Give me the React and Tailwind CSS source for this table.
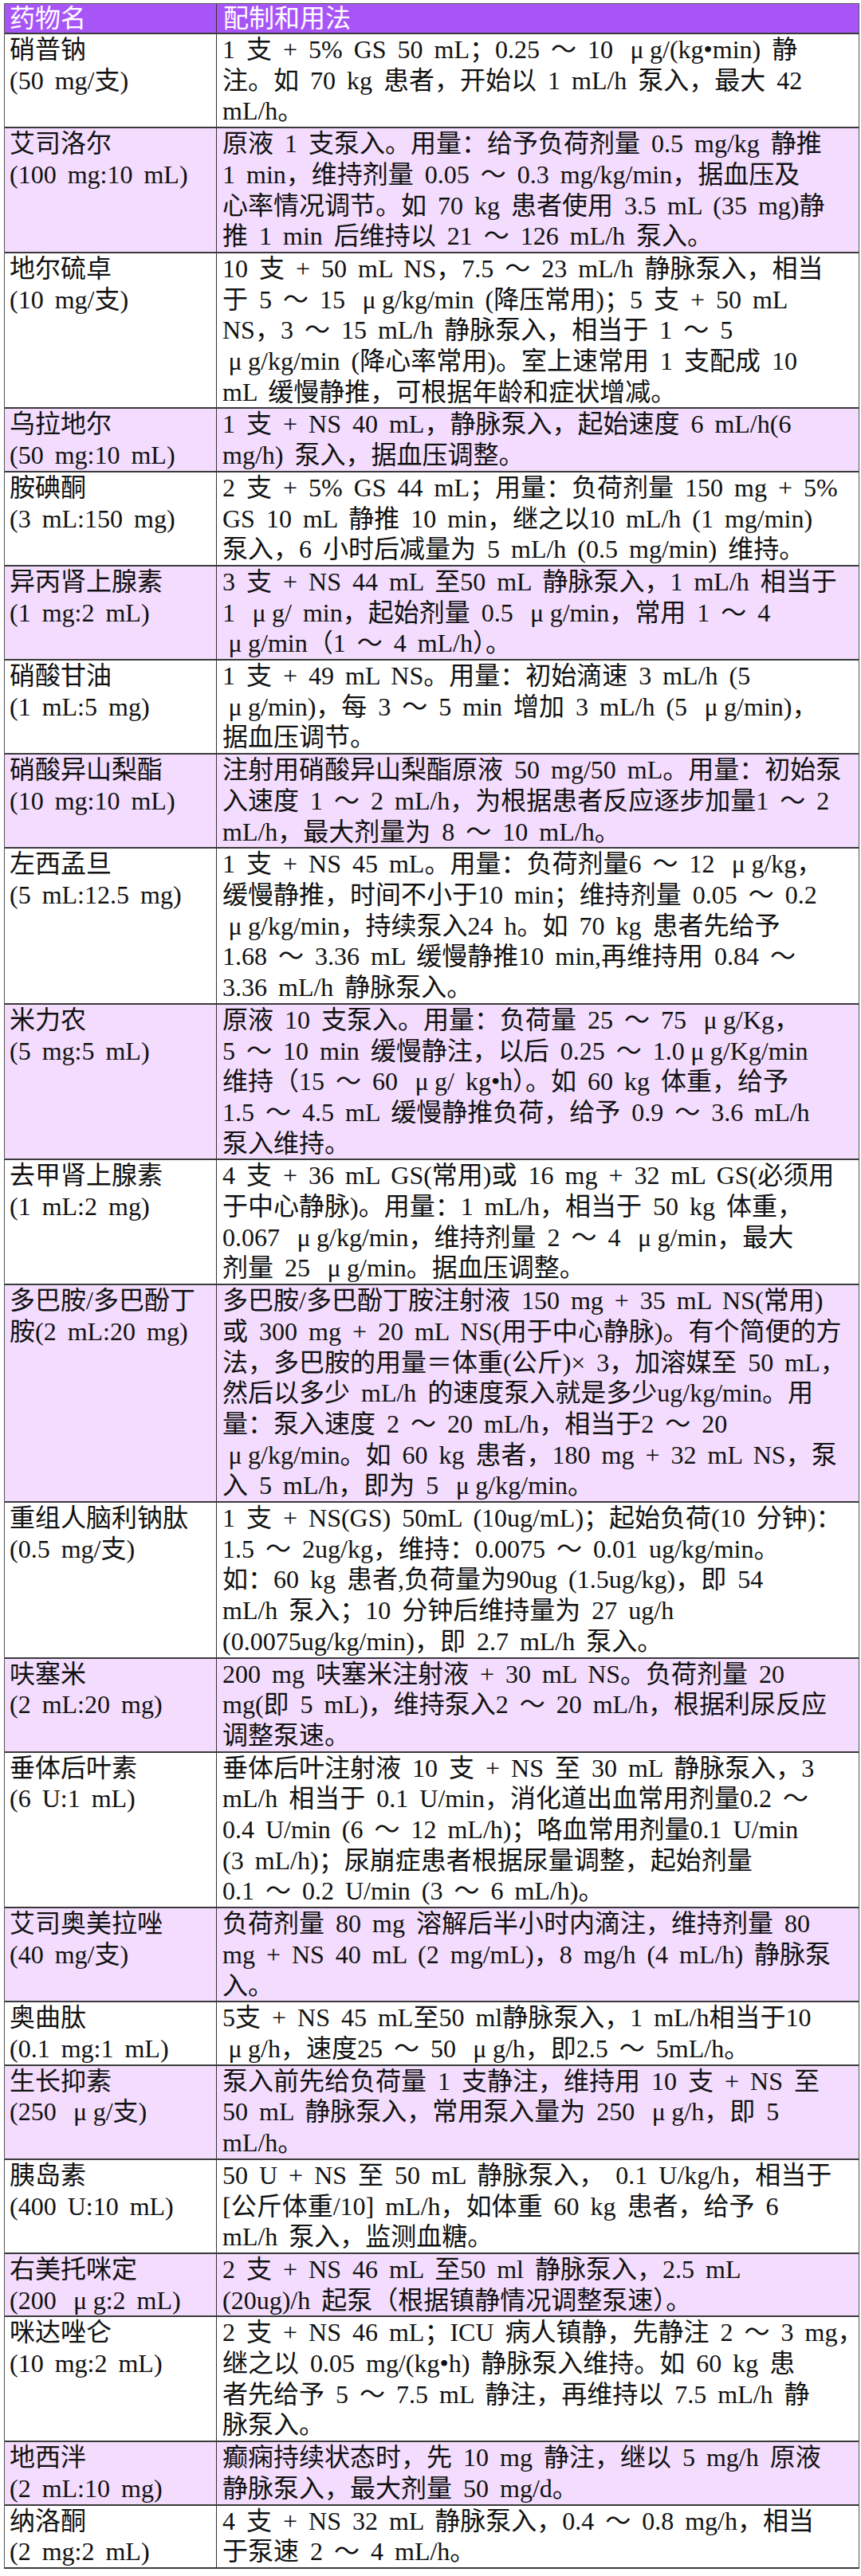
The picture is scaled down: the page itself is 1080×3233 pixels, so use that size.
const rows = [
  {
    name: ["硝普钠", "(50 mg/支)"],
    lines: [
      "1 支 + 5% GS 50 mL；0.25 ～ 10 μg/(kg•min) 静",
      "注。如 70 kg 患者，开始以 1 mL/h 泵入，最大 42",
      "mL/h。",
    ],
  },
  {
    name: ["艾司洛尔", "(100 mg:10 mL)"],
    lines: [
      "原液 1 支泵入。用量：给予负荷剂量 0.5 mg/kg 静推",
      "1 min，维持剂量 0.05 ～ 0.3 mg/kg/min，据血压及",
      "心率情况调节。如 70 kg 患者使用 3.5 mL (35 mg)静",
      "推 1 min 后维持以 21 ～ 126 mL/h 泵入。",
    ],
  },
  {
    name: ["地尔硫卓", "(10 mg/支)"],
    lines: [
      "10 支 + 50 mL NS，7.5 ～ 23 mL/h 静脉泵入，相当",
      "于 5 ～ 15 μg/kg/min (降压常用)；5 支 + 50 mL",
      "NS，3 ～ 15 mL/h 静脉泵入，相当于 1 ～ 5",
      "μg/kg/min (降心率常用)。室上速常用 1 支配成 10",
      "mL 缓慢静推，可根据年龄和症状增减。",
    ],
  },
  {
    name: ["乌拉地尔", "(50 mg:10 mL)"],
    lines: [
      "1 支 + NS 40 mL，静脉泵入，起始速度 6 mL/h(6",
      "mg/h) 泵入，据血压调整。",
    ],
  },
  {
    name: ["胺碘酮", "(3 mL:150 mg)"],
    lines: [
      "2 支 + 5% GS 44 mL；用量：负荷剂量 150 mg + 5%",
      "GS 10 mL 静推 10 min，继之以10 mL/h (1 mg/min)",
      "泵入，6 小时后减量为 5 mL/h (0.5 mg/min) 维持。",
    ],
  },
  {
    name: ["异丙肾上腺素", "(1 mg:2 mL)"],
    lines: [
      "3 支 + NS 44 mL 至50 mL 静脉泵入，1 mL/h 相当于",
      "1 μg/ min，起始剂量 0.5 μg/min，常用 1 ～ 4",
      "μg/min（1 ～ 4 mL/h）。",
    ],
  },
  {
    name: ["硝酸甘油", "(1 mL:5 mg)"],
    lines: [
      "1 支 + 49 mL NS。用量：初始滴速 3 mL/h (5",
      "μg/min)，每 3 ～ 5 min 增加 3 mL/h (5 μg/min)，",
      "据血压调节。",
    ],
  },
  {
    name: ["硝酸异山梨酯", "(10 mg:10 mL)"],
    lines: [
      "注射用硝酸异山梨酯原液 50 mg/50 mL。用量：初始泵",
      "入速度 1 ～ 2 mL/h，为根据患者反应逐步加量1 ～ 2",
      "mL/h，最大剂量为 8 ～ 10 mL/h。",
    ],
  },
  {
    name: ["左西孟旦", "(5 mL:12.5 mg)"],
    lines: [
      "1 支 + NS 45 mL。用量：负荷剂量6 ～ 12 μg/kg，",
      "缓慢静推，时间不小于10 min；维持剂量 0.05 ～ 0.2",
      "μg/kg/min，持续泵入24 h。如 70 kg 患者先给予",
      "1.68 ～ 3.36 mL 缓慢静推10 min,再维持用 0.84 ～",
      "3.36 mL/h 静脉泵入。",
    ],
  },
  {
    name: ["米力农", "(5 mg:5 mL)"],
    lines: [
      "原液 10 支泵入。用量：负荷量 25 ～ 75 μg/Kg，",
      "5 ～ 10 min 缓慢静注，以后 0.25 ～ 1.0μg/Kg/min",
      "维持（15 ～ 60 μg/ kg•h）。如 60 kg 体重，给予",
      "1.5 ～ 4.5 mL 缓慢静推负荷，给予 0.9 ～ 3.6 mL/h",
      "泵入维持。",
    ],
  },
  {
    name: ["去甲肾上腺素", "(1 mL:2 mg)"],
    lines: [
      "4 支 + 36 mL GS(常用)或 16 mg + 32 mL GS(必须用",
      "于中心静脉)。用量：1 mL/h，相当于 50 kg 体重，",
      "0.067 μg/kg/min，维持剂量 2 ～ 4 μg/min，最大",
      "剂量 25 μg/min。据血压调整。",
    ],
  },
  {
    name: ["多巴胺/多巴酚丁", "胺(2 mL:20 mg)"],
    lines: [
      "多巴胺/多巴酚丁胺注射液 150 mg + 35 mL NS(常用)",
      "或 300 mg + 20 mL NS(用于中心静脉)。有个简便的方",
      "法，多巴胺的用量＝体重(公斤)× 3，加溶媒至 50 mL，",
      "然后以多少 mL/h 的速度泵入就是多少ug/kg/min。用",
      "量：泵入速度 2 ～ 20 mL/h，相当于2 ～ 20",
      "μg/kg/min。如 60 kg 患者，180 mg + 32 mL NS，泵",
      "入 5 mL/h，即为 5 μg/kg/min。",
    ],
  },
  {
    name: ["重组人脑利钠肽", "(0.5 mg/支)"],
    lines: [
      "1 支 + NS(GS) 50mL (10ug/mL)；起始负荷(10 分钟)：",
      "1.5 ～ 2ug/kg，维持：0.0075 ～ 0.01 ug/kg/min。",
      "如：60 kg 患者,负荷量为90ug (1.5ug/kg)，即 54",
      "mL/h 泵入；10 分钟后维持量为 27 ug/h",
      "(0.0075ug/kg/min)，即 2.7 mL/h 泵入。",
    ],
  },
  {
    name: ["呋塞米", "(2 mL:20 mg)"],
    lines: [
      "200 mg 呋塞米注射液 + 30 mL NS。负荷剂量 20",
      "mg(即 5 mL)，维持泵入2 ～ 20 mL/h，根据利尿反应",
      "调整泵速。",
    ],
  },
  {
    name: ["垂体后叶素", "(6 U:1 mL)"],
    lines: [
      "垂体后叶注射液 10 支 + NS 至 30 mL 静脉泵入，3",
      "mL/h 相当于 0.1 U/min，消化道出血常用剂量0.2 ～",
      "0.4 U/min (6 ～ 12 mL/h)；咯血常用剂量0.1 U/min",
      "(3 mL/h)；尿崩症患者根据尿量调整，起始剂量",
      "0.1 ～ 0.2 U/min (3 ～ 6 mL/h)。",
    ],
  },
  {
    name: ["艾司奥美拉唑", "(40 mg/支)"],
    lines: [
      "负荷剂量 80 mg 溶解后半小时内滴注，维持剂量 80",
      "mg + NS 40 mL (2 mg/mL)，8 mg/h (4 mL/h) 静脉泵",
      "入。",
    ],
  },
  {
    name: ["奥曲肽", "(0.1 mg:1 mL)"],
    lines: [
      "5支 + NS 45 mL至50 ml静脉泵入，1 mL/h相当于10",
      "μg/h，速度25 ～ 50 μg/h，即2.5 ～ 5mL/h。",
    ],
  },
  {
    name: ["生长抑素", "(250 μg/支)"],
    lines: [
      "泵入前先给负荷量 1 支静注，维持用 10 支 + NS 至",
      "50 mL 静脉泵入，常用泵入量为 250 μg/h，即 5",
      "mL/h。",
    ],
  },
  {
    name: ["胰岛素", "(400 U:10 mL)"],
    lines: [
      "50 U + NS 至 50 mL 静脉泵入， 0.1 U/kg/h，相当于",
      "[公斤体重/10] mL/h，如体重 60 kg 患者，给予 6",
      "mL/h 泵入，监测血糖。",
    ],
  },
  {
    name: ["右美托咪定", "(200 μg:2 mL)"],
    lines: [
      "2 支 + NS 46 mL 至50 ml 静脉泵入，2.5 mL",
      "(20ug)/h 起泵（根据镇静情况调整泵速）。",
    ],
  },
  {
    name: ["咪达唑仑", "(10 mg:2 mL)"],
    lines: [
      "2 支 + NS 46 mL；ICU 病人镇静，先静注 2 ～ 3 mg，",
      "继之以 0.05 mg/(kg•h) 静脉泵入维持。如 60 kg 患",
      "者先给予 5 ～ 7.5 mL 静注，再维持以 7.5 mL/h 静",
      "脉泵入。",
    ],
  },
  {
    name: ["地西泮", "(2 mL:10 mg)"],
    lines: [
      "癫痫持续状态时，先 10 mg 静注，继以 5 mg/h 原液",
      "静脉泵入，最大剂量 50 mg/d。",
    ],
  },
  {
    name: ["纳洛酮", "(2 mg:2 mL)"],
    lines: [
      "4 支 + NS 32 mL 静脉泵入，0.4 ～ 0.8 mg/h，相当",
      "于泵速 2 ～ 4 mL/h。",
    ],
  },
];

// μ is full width in the original font, so give it a 1em box
const Line = ({ text }) => {
  const parts = text.split("μ");
  return (
    <div className="whitespace-pre">
      {parts.map((p, i) => (
        <span key={i}>
          {i > 0 && <span className="inline-block w-[1em] text-center">μ</span>}
          {p}
        </span>
      ))}
    </div>
  );
};

const App = () => {
  return (
    <div className="min-h-[3233px] bg-white pt-[4px] pl-[5px] text-[32px] leading-[38.7px] text-[#111] font-['Liberation_Serif','Noto_Sans_CJK_SC',serif] [word-spacing:6px]">
      <div className="w-[1073px] border-x border-t border-[#555]">
        <div className="flex h-[38px] bg-[#a855f7] text-white border-b-2 border-[#3a3a3a] leading-[36px]">
          <div className="w-[266px] shrink-0 border-r border-[#333] pl-[6px]">药物名</div>
          <div className="flex-1 pl-[8px]">配制和用法</div>
        </div>

        {rows.map((row, i) => (
          <div
            key={row.name[0]}
            className={`flex border-b-2 border-[#3a3a3a] ${i % 2 === 1 ? "bg-[#f3dcfd]" : "bg-white"}`}
          >
            <div className="w-[266px] shrink-0 border-r border-[#333] pl-[6px]">
              {row.name.map((n) => (
                <Line key={n} text={n} />
              ))}
            </div>
            <div className="flex-1 min-w-0 pl-[7px]">
              {row.lines.map((l, j) => (
                <Line key={j} text={l} />
              ))}
            </div>
          </div>
        ))}
      </div>
    </div>
  );
};

export default App;
